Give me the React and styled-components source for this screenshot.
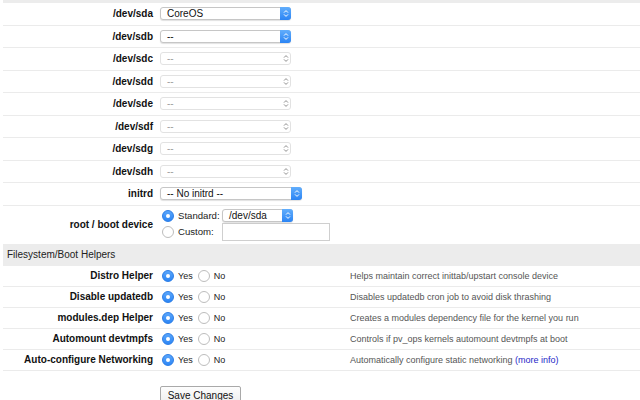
import React from "react";
import styled, { createGlobalStyle, css } from "styled-components";

const GlobalStyle = createGlobalStyle`
  html, body { margin: 0; padding: 0; background: #fff; }
  body { font-family: "Liberation Sans", Arial, Helvetica, sans-serif; color: #111; }
`;

const Page = styled.div`
  padding-left: 3px;
  width: 637px;
`;

const TopBand = styled.div`
  height: 3px;
  background: #ececec;
`;

const Row = styled.div`
  display: flex;
  align-items: center;
  height: ${(p) => p.$h || 21.5}px;
  border-bottom: ${(p) => (p.$noBorder ? "none" : "1px solid #ebebeb")};
  box-sizing: content-box;
`;

const Label = styled.div`
  width: 150px;
  flex-shrink: 0;
  text-align: right;
  font-size: 10px;
  font-weight: bold;
  color: #111;
  white-space: nowrap;
`;

const Control = styled.div`
  margin-left: 7px;
  width: ${(p) => (p.$w ? `${p.$w}px` : "auto")};
  flex-shrink: 0;
  display: flex;
  align-items: center;
`;

const SelectBox = styled.div`
  position: relative;
  box-sizing: border-box;
  width: ${(p) => p.$w}px;
  height: 13px;
  border-radius: 3px;
  background: #fff;
  display: flex;
  align-items: center;
  padding-left: 6px;
  font-size: 10px;
  ${(p) =>
    p.$disabled
      ? css`
          border: 1px solid #e2e2e2;
          color: #a0a0a0;
        `
      : css`
          border: 1px solid #c6c6c6;
          box-shadow: 0 1px 1px rgba(0, 0, 0, 0.12);
          color: #111;
        `}
`;

const Stepper = styled.div`
  position: absolute;
  right: -1px;
  top: -1px;
  bottom: -1px;
  width: 11px;
  display: flex;
  align-items: center;
  justify-content: center;
  border-radius: 0 3px 3px 0;
  ${(p) =>
    p.$disabled
      ? css`
          background: transparent;
        `
      : css`
          background: linear-gradient(#62aefc, #2b84f4);
        `}
`;

const Chevrons = ({ color }) => (
  <svg width="6" height="9" viewBox="0 0 6 9">
    <path d="M1 3.6 L3 1.6 L5 3.6" fill="none" stroke={color} strokeWidth="1" />
    <path d="M1 5.4 L3 7.4 L5 5.4" fill="none" stroke={color} strokeWidth="1" />
  </svg>
);

const Select = ({ value, w = 131, disabled }) => (
  <SelectBox $w={w} $disabled={disabled}>
    {value}
    <Stepper $disabled={disabled}>
      <Chevrons color={disabled ? "#8e8e8e" : "#fff"} />
    </Stepper>
  </SelectBox>
);

const RadioDot = styled.span`
  box-sizing: border-box;
  display: inline-flex;
  align-items: center;
  justify-content: center;
  width: 12px;
  height: 12px;
  border-radius: 50%;
  flex-shrink: 0;
  ${(p) =>
    p.$on
      ? css`
          background: linear-gradient(#5aa6fb, #2d86f5);
          border: 1px solid #2b7de6;
          &::after {
            content: "";
            width: 4px;
            height: 4px;
            border-radius: 50%;
            background: #fff;
          }
        `
      : css`
          background: #fff;
          border: 1px solid #bdbdbd;
        `}
`;

const RadioGroup = styled.div`
  display: flex;
  align-items: center;
  padding-left: 2px;
`;

const RadioText = styled.span`
  font-size: 9px;
  color: #222;
  margin-left: 4px;
  margin-right: ${(p) => p.$mr || 0}px;
  white-space: nowrap;
`;

const BootBody = styled.div`
  margin-left: 7px;
  display: flex;
  flex-direction: column;
  padding: 3px 0 3px 2px;
`;

const BootLine = styled.div`
  display: flex;
  align-items: center;
  height: ${(p) => p.$h}px;
`;

const BootText = styled.span`
  font-size: 9.6px;
  color: #222;
  margin-left: 4px;
  width: 44px;
  white-space: nowrap;
`;

const TextInput = styled.div`
  box-sizing: border-box;
  width: 108px;
  height: 18px;
  border: 1px solid #cfcfcf;
  background: #fff;
`;

const SectionHeader = styled.div`
  height: 22px;
  background: #ececec;
  display: flex;
  align-items: center;
  padding-left: 4px;
  font-size: 10px;
  color: #222;
`;

const Desc = styled.div`
  font-size: 9px;
  color: #555;
  white-space: nowrap;
`;

const Link = styled.a`
  color: #2626c8;
  text-decoration: none;
`;

const SaveButton = styled.button`
  margin: 15px 0 0 157px;
  width: 81px;
  height: 20px;
  padding: 0;
  font-family: "Liberation Sans", Arial, sans-serif;
  font-size: 10px;
  color: #111;
  background: linear-gradient(#fdfdfd, #ececec);
  border: 1px solid #a9a9a9;
  border-radius: 2px;
`;

const devices = [
  { name: "/dev/sda", value: "CoreOS", disabled: false },
  { name: "/dev/sdb", value: "--", disabled: false },
  { name: "/dev/sdc", value: "--", disabled: true },
  { name: "/dev/sdd", value: "--", disabled: true },
  { name: "/dev/sde", value: "--", disabled: true },
  { name: "/dev/sdf", value: "--", disabled: true },
  { name: "/dev/sdg", value: "--", disabled: true },
  { name: "/dev/sdh", value: "--", disabled: true },
];

const helpers = [
  { name: "Distro Helper", desc: "Helps maintain correct inittab/upstart console device" },
  { name: "Disable updatedb", desc: "Disables updatedb cron job to avoid disk thrashing" },
  { name: "modules.dep Helper", desc: "Creates a modules dependency file for the kernel you run" },
  { name: "Automount devtmpfs", desc: "Controls if pv_ops kernels automount devtmpfs at boot" },
  { name: "Auto-configure Networking", desc: "Automatically configure static networking", link: true },
];

export default function App() {
  return (
    <>
      <GlobalStyle />
      <Page>
        <TopBand />
        {devices.map((d) => (
          <Row key={d.name}>
            <Label>{d.name}</Label>
            <Control>
              <Select value={d.value} disabled={d.disabled} />
            </Control>
          </Row>
        ))}
        <Row>
          <Label>initrd</Label>
          <Control>
            <Select value="-- No initrd --" w={142} />
          </Control>
        </Row>
        <Row $h={38} $noBorder>
          <Label>root / boot device</Label>
          <BootBody>
            <BootLine $h={14}>
              <RadioDot $on />
              <BootText>Standard:</BootText>
              <Select value="/dev/sda" w={71} />
            </BootLine>
            <BootLine $h={18}>
              <RadioDot />
              <BootText>Custom:</BootText>
              <TextInput />
            </BootLine>
          </BootBody>
        </Row>
        <SectionHeader>Filesystem/Boot Helpers</SectionHeader>
        {helpers.map((h) => (
          <Row key={h.name} $h={20}>
            <Label>{h.name}</Label>
            <Control $w={190}>
              <RadioGroup>
                <RadioDot $on />
                <RadioText $mr={5}>Yes</RadioText>
                <RadioDot />
                <RadioText>No</RadioText>
              </RadioGroup>
            </Control>
            <Desc>
              {h.desc}
              {h.link && (
                <>
                  {" "}
                  <Link href="#">(more info)</Link>
                </>
              )}
            </Desc>
          </Row>
        ))}
        <SaveButton>Save Changes</SaveButton>
      </Page>
    </>
  );
}
